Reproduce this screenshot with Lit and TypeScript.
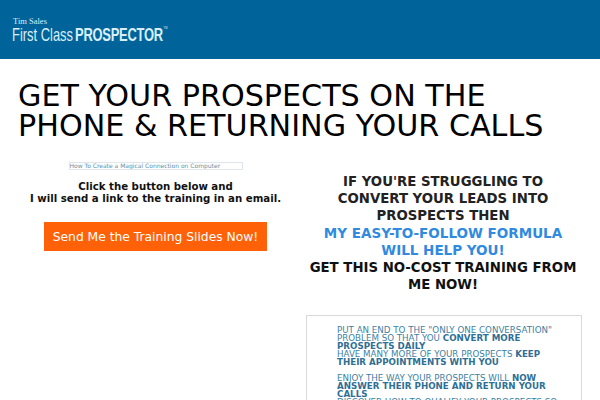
import { LitElement, html, css } from "lit";
import { customElement } from "lit/decorators.js";

@customElement("app-root")
export class AppRoot extends LitElement {
  static styles = css`
    :host {
      display: block;
      width: 600px;
      height: 400px;
      overflow: hidden;
      background: #fff;
      font-family: "DejaVu Sans", sans-serif;
    }
    .header {
      height: 59px;
      background: #00649b;
      padding: 17px 0 0 12px;
      box-sizing: border-box;
      color: #d8effa;
    }
    .tim {
      font-family: "Liberation Serif", serif;
      font-size: 8.5px;
      line-height: 8px;
      padding-left: 1px;
    }
    .logo {
      display: flex;
      align-items: flex-start;
      font-family: "Liberation Sans", sans-serif;
      font-size: 19px;
      line-height: 19px;
      white-space: nowrap;
      transform: scaleX(0.68);
      transform-origin: left center;
    }
    .logo b {
      margin-left: 3px;
      letter-spacing: -0.35px;
    }
    .logo sup {
      font-size: 4px;
      line-height: 5px;
      margin-left: 1px;
    }
    h1 {
      margin: 0;
      padding: 22px 18px 0;
      font-weight: 400;
      font-size: 30.2px;
      line-height: 30px;
      color: #000;
    }
    .cols {
      display: grid;
      grid-template-columns: 300px 300px;
      padding-top: 15px;
    }
    .left {
      display: flex;
      flex-direction: column;
      align-items: center;
      padding-top: 6px;
      padding-left: 11px;
      box-sizing: border-box;
    }
    .video {
      width: 174px;
      height: 8px;
      box-sizing: border-box;
      border: 1px solid #dfe6ec;
      font-size: 6px;
      line-height: 6px;
      color: #5f8fa8;
      white-space: nowrap;
      overflow: hidden;
    }
    .ask {
      margin: 11px 0 0;
      text-align: center;
      font-weight: 700;
      font-size: 10.2px;
      line-height: 12px;
      color: #111;
    }
    .btn {
      margin-top: 17px;
      width: 223px;
      height: 29px;
      border: none;
      padding: 0;
      background: #ff6109;
      color: #fff;
      font-family: inherit;
      font-size: 12.3px;
    }
    .right {
      padding: 17px 18px 0 6px;
      display: flex;
      flex-direction: column;
    }
    .pitch {
      margin: 0 4px 0 2px;
      text-align: center;
      font-weight: 700;
      font-size: 13.3px;
      line-height: 17.2px;
      color: #222;
    }
    .pitch .blue {
      color: #2f8ae0;
      font-size: 13.5px;
    }
    .pitch .dark { color: #111; }
    .box {
      margin-top: 22px;
      height: 120px;
      border: 1px solid #d9d9d9;
      box-sizing: border-box;
      padding: 10px 20px 0 30px;
      font-size: 8.7px;
      line-height: 8px;
      color: #3d7fa3;
    }
    .box p { margin: 0; }
    .box p.gap { margin-top: 8px; }
    .box b { color: #2f6f94; }
  `;

  render() {
    return html`
      <div class="header">
        <div class="tim">Tim Sales</div>
        <div class="logo">First Class<b>PROSPECTOR</b><sup>TM</sup></div>
      </div>
      <h1>GET YOUR PROSPECTS ON THE PHONE &amp; RETURNING YOUR CALLS</h1>
      <div class="cols">
        <div class="left">
          <div class="video">How To Create a Magical Connection on Computer</div>
          <p class="ask">Click the button below and<br />I will send a link to the training in an email.</p>
          <button class="btn">Send Me the Training Slides Now!</button>
        </div>
        <div class="right">
          <p class="pitch">
            IF YOU'RE STRUGGLING TO CONVERT YOUR LEADS INTO PROSPECTS THEN<br />
            <span class="blue">MY EASY-TO-FOLLOW FORMULA WILL HELP YOU!</span><br />
            <span class="dark">GET THIS NO-COST TRAINING FROM ME NOW!</span>
          </p>
          <div class="box">
            <p>PUT AN END TO THE "ONLY ONE CONVERSATION" PROBLEM SO THAT YOU <b>CONVERT MORE PROSPECTS DAILY</b></p>
            <p>HAVE MANY MORE OF YOUR PROSPECTS <b>KEEP THEIR APPOINTMENTS WITH YOU</b></p>
            <p class="gap">ENJOY THE WAY YOUR PROSPECTS WILL <b>NOW ANSWER THEIR PHONE AND RETURN YOUR CALLS</b></p>
            <p>DISCOVER HOW TO QUALIFY YOUR PROSPECTS SO</p>
          </div>
        </div>
      </div>
    `;
  }
}
